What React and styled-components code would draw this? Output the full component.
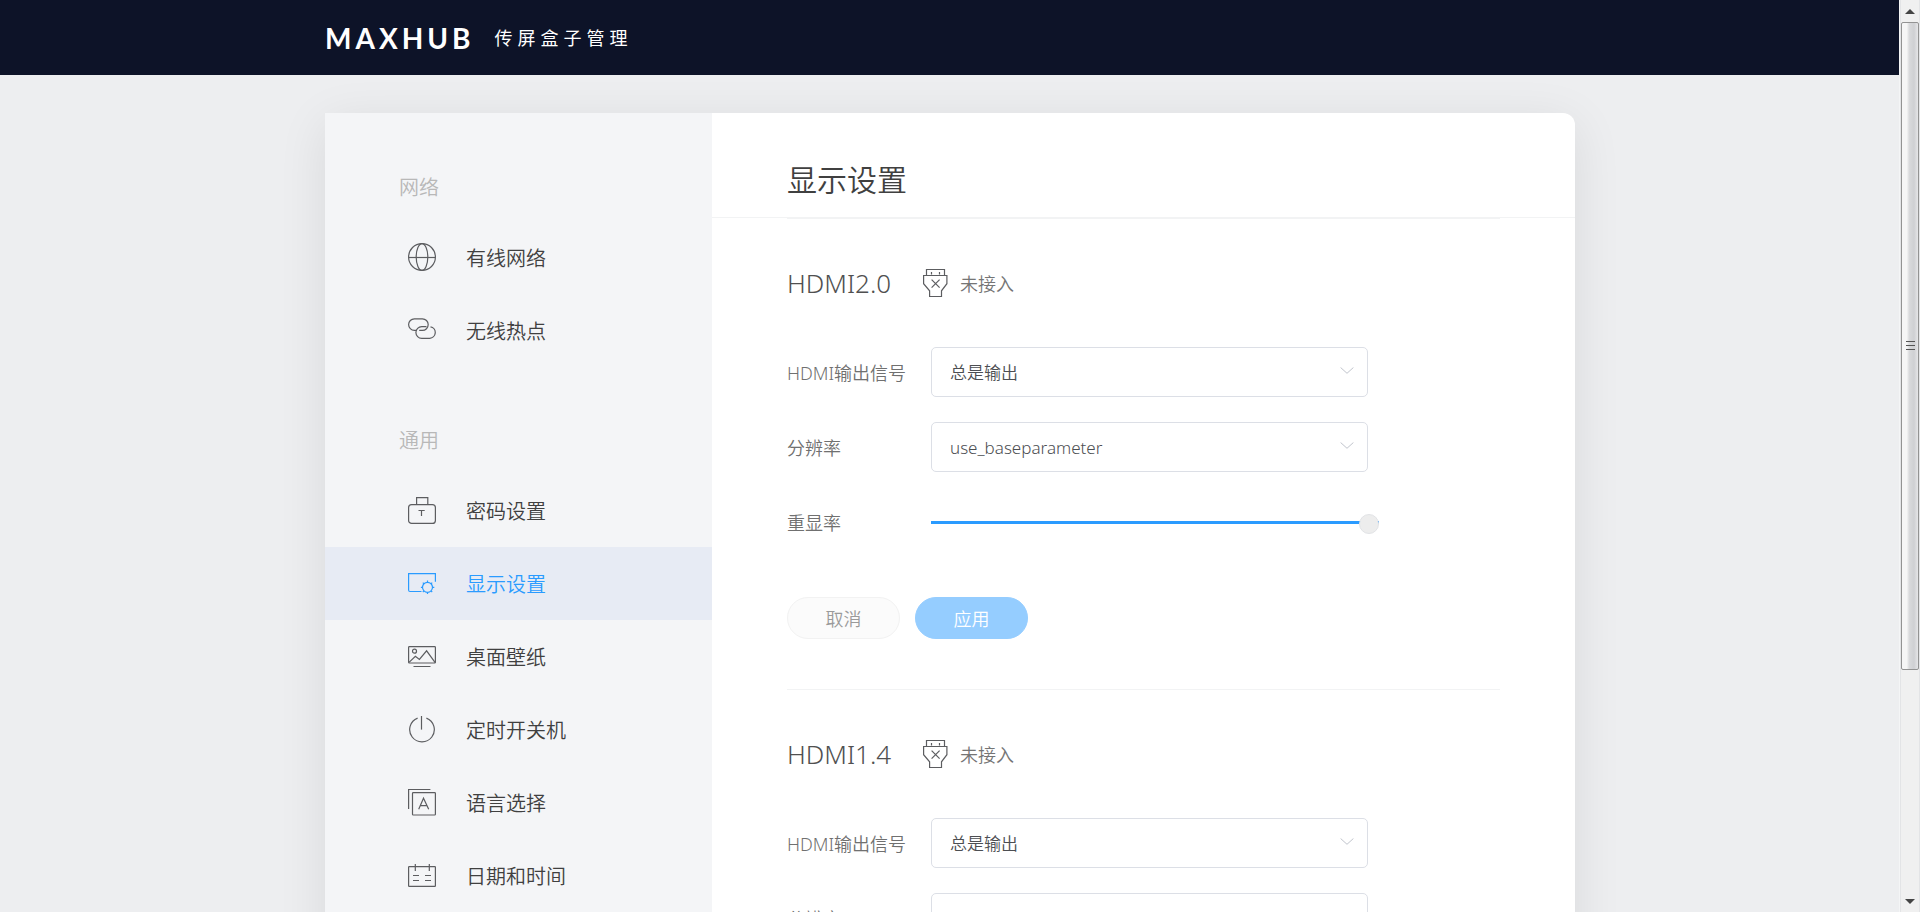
import React, { useState } from "react";
import styled, { createGlobalStyle } from "styled-components";

const GlobalStyle = createGlobalStyle`
  *, *::before, *::after { box-sizing: border-box; }
  body {
    margin: 0;
    background: #edeef0;
    color: #404040;
    font-family: "Noto Sans", "Noto Sans CJK SC", sans-serif;
    font-size: 18px;
    font-weight: 350;
  }
  button, select, input { font: inherit; }
  h1, h2, h3, ul { margin: 0; padding: 0; font-weight: inherit; }
`;

const Shell = styled.div`
  display: grid;
  grid-template-columns: minmax(0, 1fr) 20px;
  height: 100vh;
`;

const Page = styled.div`
  overflow: hidden;
`;

const TopBar = styled.header`
  height: 75px;
  background: #0d1328;
  color: #fff;
`;

const TopBarInner = styled.div`
  display: flex;
  align-items: center;
  gap: 20px;
  max-width: 1250px;
  height: 100%;
  margin: 0 auto;
`;

const Logo = styled.a`
  color: #fff;
  font-family: Lato, sans-serif;
  font-size: 28px;
  font-weight: 700;
  line-height: 32px;
  letter-spacing: 4px;
  text-decoration: none;
`;

const ProductName = styled.span`
  font-size: 18px;
  font-weight: 400;
  line-height: 28px;
  letter-spacing: 5px;
`;

const Card = styled.div`
  display: grid;
  grid-template-columns: 387px minmax(0, 1fr);
  max-width: 1250px;
  margin: 38px auto;
  border-radius: 0 12px 12px 0;
  background: #fff;
  box-shadow: 0 10px 50px rgba(0, 0, 0, 0.09);
`;

const Sidebar = styled.nav`
  display: flex;
  flex-direction: column;
  gap: 41px;
  padding: 42px 0;
  background: #f4f5f7;
`;

const GroupTitle = styled.h3`
  height: 66px;
  padding-left: 74px;
  color: #b8b8b8;
  font-size: 20px;
  line-height: 66px;
`;

const MenuList = styled.ul`
  list-style: none;
`;

const MenuLink = styled.a`
  display: flex;
  align-items: center;
  gap: 30px;
  height: 73px;
  padding-left: 83px;
  background: ${(p) => (p.$active ? "#e7ebf4" : "transparent")};
  color: ${(p) => (p.$active ? "#2a9bff" : "#404040")};
  font-size: 20px;
  text-decoration: none;

  svg { color: ${(p) => (p.$active ? "#2a9bff" : "#5c5d60")}; }
`;

const Content = styled.main`
  min-width: 0;
`;

const ContentHeader = styled.div`
  height: 105px;
  padding: 45px 75px 0;
  border-bottom: 1px solid #f2f3f4;
`;

const PageTitle = styled.h1`
  font-size: 30px;
  line-height: 44px;
`;

const Sections = styled.div`
  padding: 0 75px;
`;

const Section = styled.section`
  padding-bottom: 50px;
  border-top: 1px solid #f2f3f4;
`;

const SectionHead = styled.div`
  display: flex;
  align-items: center;
  height: 128px;
  gap: 32px;
`;

const SectionTitle = styled.h2`
  color: #505050;
  font-size: 26px;
`;

const Status = styled.span`
  display: flex;
  align-items: center;
  gap: 12px;
  color: #757575;

  svg { color: #5c5d60; }
`;

const Fields = styled.div`
  display: flex;
  flex-direction: column;
  gap: 25px;
`;

const Field = styled.div`
  display: grid;
  grid-template-columns: 144px minmax(0, 448px);
  align-items: center;
  height: 50px;
`;

const FieldLabel = styled.label`
  color: #707070;
`;

const SelectWrap = styled.div`
  position: relative;
  margin-right: 11px;

  svg {
    position: absolute;
    top: 20px;
    right: 14px;
    color: #c0c4cc;
    pointer-events: none;
  }
`;

const Select = styled.select`
  display: block;
  width: 100%;
  height: 50px;
  padding: 0 40px 0 18px;
  appearance: none;
  border: 1px solid #dcdfe6;
  border-radius: 5px;
  background: #fff;
  color: #4c4e52;
  font-size: 17px;
`;

const Slider = styled.input`
  width: 100%;
  height: 20px;
  margin: 0;
  appearance: none;
  background: transparent;

  &::-webkit-slider-runnable-track {
    height: 3px;
    background: linear-gradient(to right, #2a9bff var(--filled), #e4e7ed var(--filled));
  }

  &::-webkit-slider-thumb {
    width: 20px;
    height: 20px;
    margin-top: -7px;
    appearance: none;
    border: 1px solid #e2e3e6;
    border-radius: 50%;
    background: #ededed;
  }
`;

const Actions = styled.div`
  display: flex;
  gap: 15px;
  margin-top: 50px;
`;

const PillButton = styled.button`
  width: 113px;
  height: 42px;
  padding: 0;
  border: 1px solid ${(p) => (p.$primary ? "#95cdff" : "#f2f2f2")};
  border-radius: 21px;
  background: ${(p) => (p.$primary ? "#95cdff" : "#fbfbfb")};
  color: ${(p) => (p.$primary ? "#fff" : "#9a9a9a")};
`;

const ScrollTrack = styled.div`
  display: flex;
  flex-direction: column;
  align-items: center;
  border: solid #e3e4e6;
  border-width: 0 1px;
  background: #f0f0f0;
  box-shadow: -1px 0 0 #f4f5f6;
`;

const ScrollArrow = styled.div`
  display: flex;
  align-items: center;
  justify-content: center;
  height: 22px;
`;

const ScrollThumb = styled.div`
  display: flex;
  align-items: center;
  justify-content: center;
  width: 100%;
  height: 71%;
  border: 1px solid #939393;
  border-radius: 2px;
  background: linear-gradient(to right, #f6f6f6 0 30%, #d9dadc 45%, #cfd0d3 75%, #e6e6e8);
`;

const ScrollRest = styled.div`
  flex: 1;
`;

const iconShapes = {
  globe: (
    <>
      <circle cx="14" cy="14" r="13.4" />
      <ellipse cx="14" cy="14" rx="5.8" ry="13.4" />
      <path d="M.6 14.5h26.8" />
    </>
  ),
  link: (
    <>
      <path d="M8.7 14.4H6.4A5.8 5.8 0 0 1 6.4 2.8h8a5.8 5.8 0 0 1 0 11.6h-3.2" />
      <path d="M18.5 10.7h-4.8a5.8 5.8 0 0 0 0 11.6h8a5.8 5.8 0 0 0 .8-11.5" />
    </>
  ),
  lock: (
    <>
      <rect x=".6" y="8.6" width="26.8" height="18.8" rx="3" />
      <path d="M8.6 8.5V1.6h11.2v6.9M10.5 14.5h6.2M13.5 14.5v5.4" />
    </>
  ),
  display: (
    <>
      <path d="M13.5 22.5H2a1.4 1.4 0 0 1-1.4-1.4V4.6h26.8v8.2" />
      <circle cx="19.5" cy="18.3" r="5" />
      <path d="M19.5 13.3v-1.8M19.5 23.3v1.8M14.5 18.3h-1.6M24.5 18.3h1.8M16 14.8l-1.2-1.2M23 14.8l1.2-1.2M16 21.8l-1.2 1.2M23 21.8l1.2 1.2" />
    </>
  ),
  wallpaper: (
    <>
      <rect x=".6" y="4.6" width="26.8" height="16.4" rx=".8" />
      <circle cx="6.5" cy="9.2" r="2" />
      <path d="M1 20.4l6.4-6.2 4 3.2 7.2-8.6 8.6 11.8M5.5 24.5h17" />
    </>
  ),
  power: (
    <>
      <path d="M9.6 3.1a12.3 12.3 0 1 0 8.8 0" />
      <path d="M13.5 1v13.6" />
    </>
  ),
  language: (
    <>
      <path d="M.6 21V1.5h21.8" />
      <rect x="4.5" y="4.6" width="22.9" height="22.4" rx=".8" />
      <path d="M10.7 21.2l4.8-11 5.2 11M12.6 17.6h6.2" />
    </>
  ),
  calendar: (
    <>
      <rect x=".6" y="5.6" width="26.8" height="19.8" rx=".6" />
      <path d="M7.3 3v7M21.3 3v7M5 14.5h6M17 14.5h6M5 19.5h6M17 19.5h6" />
    </>
  ),
};

function MenuIcon({ name }) {
  return (
    <svg width="28" height="29" viewBox="0 0 28 29" fill="none" stroke="currentColor" strokeWidth="1.2" aria-hidden="true">
      {iconShapes[name]}
    </svg>
  );
}

function PlugIcon() {
  return (
    <svg width="25" height="30" viewBox="0 0 25 30" fill="none" stroke="currentColor" strokeWidth="1.2" aria-hidden="true">
      <path d="M3.5 7V1.5h18V7M8.5 4v2.5M16.5 4v2.5" />
      <path d="M.6 7.5h23.3v8.2l-5.4 7.1v5.7H6.6v-5.7L.6 15.7z" />
      <path d="M8.6 11.6l8 8M16.6 11.6l-8 8" />
    </svg>
  );
}

function ChevronDown() {
  return (
    <svg width="14" height="8" viewBox="0 0 14 8" fill="none" stroke="currentColor" aria-hidden="true">
      <path d="M.6.5L7 6.3 13.4.5" />
    </svg>
  );
}

const menuGroups = [
  {
    title: "网络",
    items: [
      { label: "有线网络", icon: "globe" },
      { label: "无线热点", icon: "link" },
    ],
  },
  {
    title: "通用",
    items: [
      { label: "密码设置", icon: "lock" },
      { label: "显示设置", icon: "display", active: true },
      { label: "桌面壁纸", icon: "wallpaper" },
      { label: "定时开关机", icon: "power" },
      { label: "语言选择", icon: "language" },
      { label: "日期和时间", icon: "calendar" },
    ],
  },
];

function OutputSection({ id, name }) {
  const [overscan, setOverscan] = useState(100);
  return (
    <Section>
      <SectionHead>
        <SectionTitle>{name}</SectionTitle>
        <Status>
          <PlugIcon />
          未接入
        </Status>
      </SectionHead>
      <Fields>
        <Field>
          <FieldLabel htmlFor={`${id}-signal`}>HDMI输出信号</FieldLabel>
          <SelectWrap>
            <Select id={`${id}-signal`}>
              <option>总是输出</option>
            </Select>
            <ChevronDown />
          </SelectWrap>
        </Field>
        <Field>
          <FieldLabel htmlFor={`${id}-resolution`}>分辨率</FieldLabel>
          <SelectWrap>
            <Select id={`${id}-resolution`}>
              <option>use_baseparameter</option>
            </Select>
            <ChevronDown />
          </SelectWrap>
        </Field>
        <Field>
          <FieldLabel htmlFor={`${id}-overscan`}>重显率</FieldLabel>
          <Slider
            id={`${id}-overscan`}
            type="range"
            min="0"
            max="100"
            value={overscan}
            onChange={(e) => setOverscan(Number(e.target.value))}
            style={{ "--filled": `${overscan}%` }}
          />
        </Field>
      </Fields>
      <Actions>
        <PillButton type="button">取消</PillButton>
        <PillButton type="button" $primary>应用</PillButton>
      </Actions>
    </Section>
  );
}

export default function App() {
  return (
    <>
      <GlobalStyle />
      <Shell>
        <Page>
          <TopBar>
            <TopBarInner>
              <Logo href="#">MAXHUB</Logo>
              <ProductName>传屏盒子管理</ProductName>
            </TopBarInner>
          </TopBar>
          <Card>
            <Sidebar>
              {menuGroups.map((group) => (
                <div key={group.title}>
                  <GroupTitle>{group.title}</GroupTitle>
                  <MenuList>
                    {group.items.map((item) => (
                      <li key={item.label}>
                        <MenuLink href="#" $active={item.active}>
                          <MenuIcon name={item.icon} />
                          {item.label}
                        </MenuLink>
                      </li>
                    ))}
                  </MenuList>
                </div>
              ))}
            </Sidebar>
            <Content>
              <ContentHeader>
                <PageTitle>显示设置</PageTitle>
              </ContentHeader>
              <Sections>
                <OutputSection id="hdmi20" name="HDMI2.0" />
                <OutputSection id="hdmi14" name="HDMI1.4" />
              </Sections>
            </Content>
          </Card>
        </Page>
        <ScrollTrack aria-hidden="true">
          <ScrollArrow>
            <svg width="10" height="5" viewBox="0 0 10 5" fill="#444">
              <path d="M5 0l5 5H0z" />
            </svg>
          </ScrollArrow>
          <ScrollThumb>
            <svg width="9" height="11" viewBox="0 0 9 11" stroke="#555">
              <path d="M0 1.5h9M0 5.5h9M0 9.5h9" />
            </svg>
          </ScrollThumb>
          <ScrollRest />
          <ScrollArrow>
            <svg width="10" height="5" viewBox="0 0 10 5" fill="#444">
              <path d="M0 0h10L5 5z" />
            </svg>
          </ScrollArrow>
        </ScrollTrack>
      </Shell>
    </>
  );
}
